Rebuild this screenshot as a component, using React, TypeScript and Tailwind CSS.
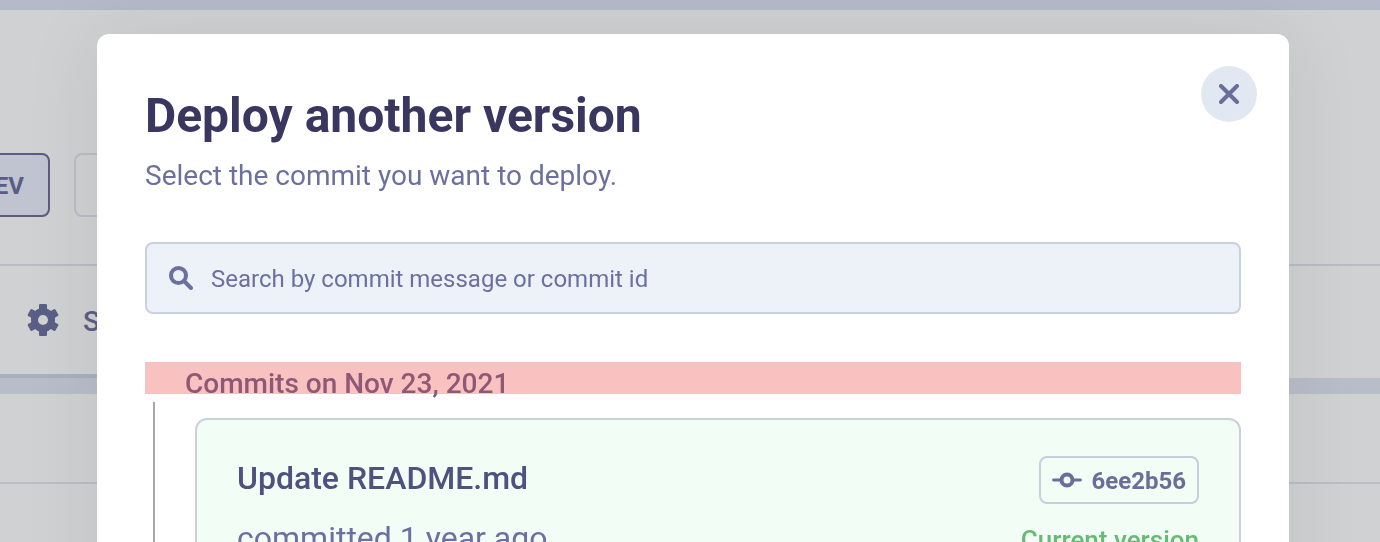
import React from "react";

function CommitIcon() {
  return (
    <svg viewBox="0 0 30 16" className="h-4 w-[30px]" fill="none" stroke="currentColor" aria-hidden="true">
      <circle cx="15" cy="8" r="5.5" strokeWidth="4" />
      <path d="M1.5 8H8M22 8h6.500" strokeWidth="2.800" strokeLinecap="round" />
    </svg>
  );
}

function SearchIcon() {
  return (
    <svg viewBox="0 0 24 24" className="size-6 shrink-0" fill="none" stroke="currentColor" strokeWidth="4" aria-hidden="true">
      <circle cx="9.5" cy="9.5" r="7.5" />
      <path d="M15 15l7 7" strokeLinecap="round" />
    </svg>
  );
}

function GearIcon() {
  return (
    <svg viewBox="0 0 32 32" className="size-8 shrink-0" fill="currentColor" aria-hidden="true">
      <circle cx="16" cy="16" r="8.500" fill="none" stroke="currentColor" strokeWidth="7" />
      {[0, 60, 120, 180, 240, 300].map((angle) => (
        <rect key={angle} x="12" y="0" width="8" height="8" rx="1.2" transform={`rotate(${angle} 16 16)`} />
      ))}
    </svg>
  );
}

function CloseIcon() {
  return (
    <svg viewBox="0 0 20 20" className="size-5" fill="none" stroke="currentColor" strokeWidth="4" strokeLinecap="round" aria-hidden="true">
      <path d="M2 2l16 16M18 2L2 18" />
    </svg>
  );
}

function Backdrop() {
  return (
    <div className="min-h-screen bg-[#d0d1d2]" aria-hidden="true">
      <div className="h-2.5 bg-[#b5bac9]" />
      <div className="flex h-[256px] items-start gap-6 border-b-2 border-[#b7bbc8] pt-[143px]">
        <button tabIndex={-1} className="-ml-10 h-16 w-[90px] rounded-lg border-2 border-[#5b5c80] bg-[#c0c4d0] pt-0.5 pr-6 text-right text-2xl font-bold text-[#5a5c86]">
          DEV
        </button>
        <button tabIndex={-1} className="h-16 w-[120px] rounded-lg border-2 border-[#bbbcc4]" />
      </div>
      <div className="flex h-28 items-center">
        <a href="#settings" tabIndex={-1} className="flex h-full w-[200px] items-center gap-6 border-b-4 border-[#a8b1c0] pl-[27px] text-[28px] font-medium text-[#5a5f85]">
          <GearIcon />
          <span className="pt-1">Settings</span>
        </a>
      </div>
      <div className="h-4 bg-[#b7beca]" />
      <div className="h-[90px] border-b-2 border-[#bcbdc1]" />
    </div>
  );
}

function CommitCard() {
  return (
    <article className="flex items-start justify-between rounded-xl border-2 border-[#cad1de] bg-[#f2fdf5] px-10 pt-9 pb-10">
      <div>
        <h3 className="mt-0.5 text-[32px] leading-10 font-medium text-[#4d527f]">Update README.md</h3>
        <p className="mt-5 text-[32px] leading-10 text-[#6c70a0]">committed 1 year ago</p>
      </div>
      <div className="flex flex-col items-end">
        <button className="flex h-12 items-center gap-2.5 rounded-lg border-2 border-[#c7cfdd] px-[11px] text-2xl font-bold text-[#696e9b]">
          <CommitIcon />
          <span className="pt-0.5">6ee2b56</span>
        </button>
        <p className="mt-5 text-[26px] leading-8 font-medium text-[#68b976]">Current version</p>
      </div>
    </article>
  );
}

export default function App() {
  return (
    <div className="h-screen overflow-hidden font-[Roboto,sans-serif]">
      <Backdrop />
      <div className="fixed inset-0 overflow-hidden pt-[34px] pr-[91px] pl-[97px]">
        <section
          role="dialog"
          aria-modal="true"
          aria-labelledby="dialog-title"
          className="relative rounded-xl bg-white px-12 pt-12 pb-12 shadow-[0_0_80px_rgba(0,0,0,0.08)]"
        >
          <button
            aria-label="Close"
            className="absolute top-8 right-8 flex size-14 items-center justify-center rounded-full bg-[#e2e8f2] text-[#686d9a]"
          >
            <CloseIcon />
          </button>
          <h1 id="dialog-title" className="mt-1 text-[48px] leading-[60px] font-bold text-[#39365f]">
            Deploy another version
          </h1>
          <p className="mt-2 text-[28px] leading-11 text-[#6c709f]">Select the commit you want to deploy.</p>
          <label className="mt-11 flex h-[72px] items-center gap-[18px] rounded-lg border-2 border-[#c9d1de] bg-[#edf1f8] px-[22px] text-[#6c709f]">
            <SearchIcon />
            <input
              type="search"
              aria-label="Search commits"
              placeholder="Search by commit message or commit id"
              className="min-w-0 flex-1 bg-transparent pt-0.5 text-2xl outline-none placeholder:text-[#6c709f]"
            />
          </label>
          <div className="relative mt-12 flex h-8 items-center pl-10">
            <h2 className="mt-3 text-[28px] leading-8 font-medium text-[#5f648f]">Commits on Nov 23, 2021</h2>
            <div className="absolute inset-0 bg-[#ef4444]/33" />
          </div>
          <div className="mt-2 ml-2 border-l-2 border-[#a5a7ad] pt-4 pl-10">
            <CommitCard />
          </div>
        </section>
      </div>
    </div>
  );
}
